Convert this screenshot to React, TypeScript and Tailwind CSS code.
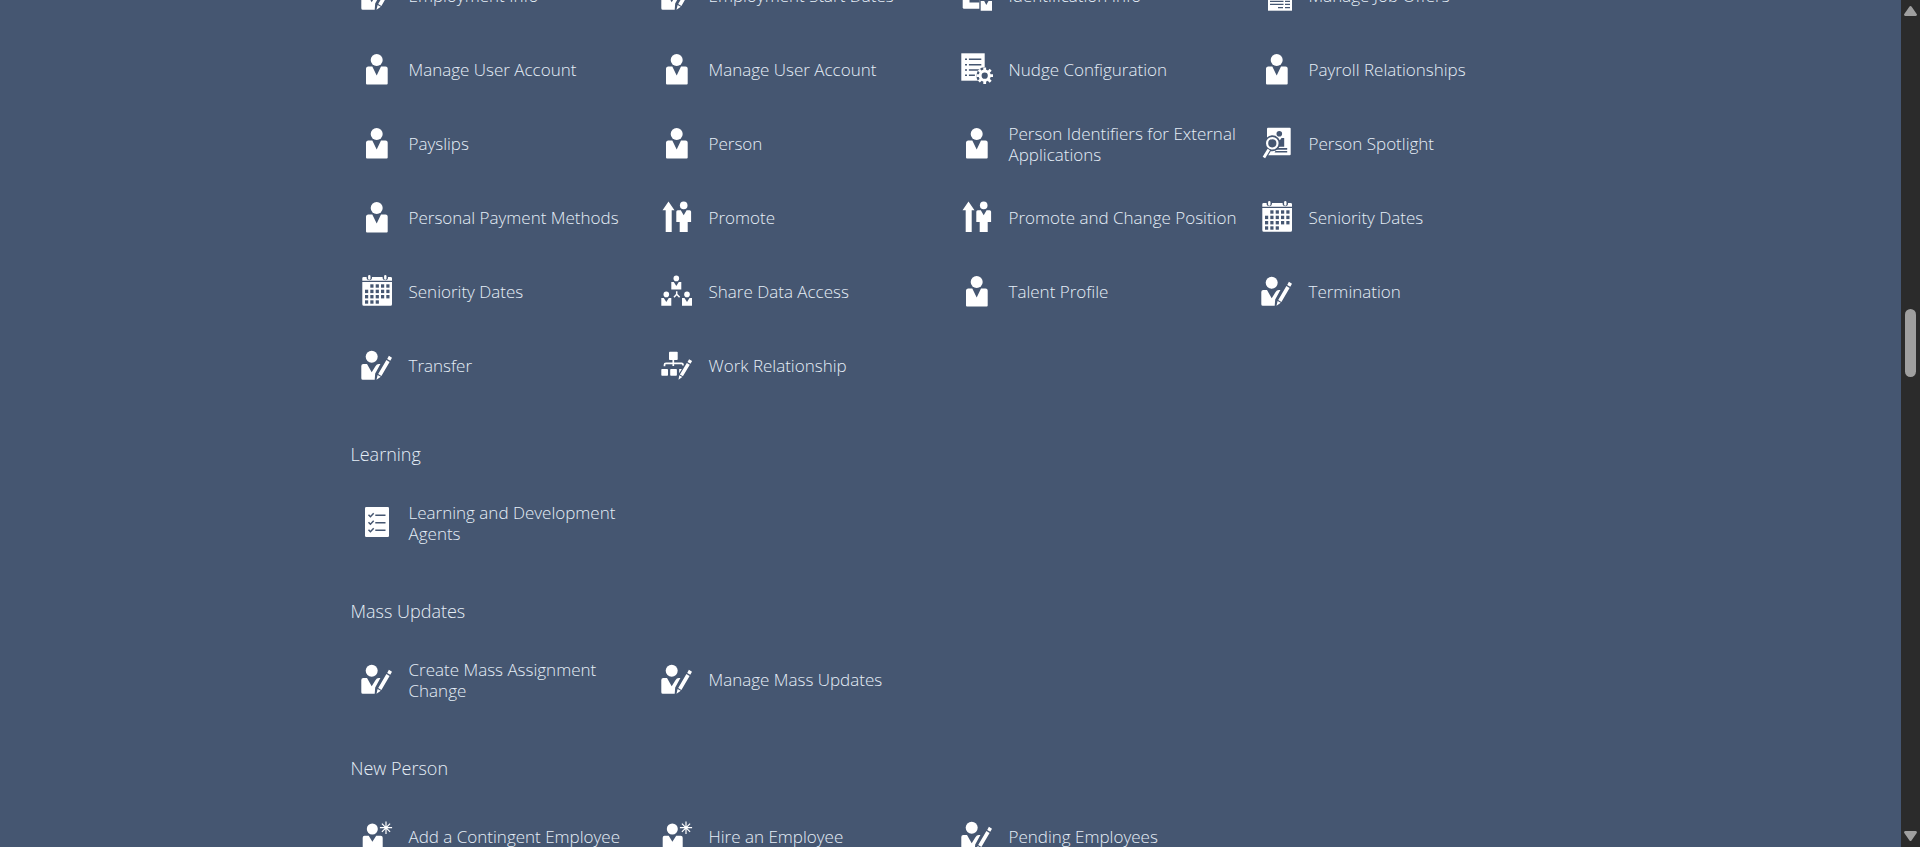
import type { ReactNode } from 'react';

const BG = '#455671';

type IconName =
  | 'person'
  | 'edit'
  | 'idCard'
  | 'offers'
  | 'nudge'
  | 'spotlight'
  | 'promote'
  | 'calendar'
  | 'share'
  | 'work'
  | 'checklist'
  | 'add';

const cells: [number, number][] = [];
[9.3, 14.7, 20, 25.3].forEach((y, row) => {
  [4, 9.3, 14.7, 20, 25.3].forEach((x, col) => {
    if (row === 0 && col === 0) return;
    if (row === 3 && col > 2) return;
    cells.push([x, y]);
  });
});

const icons: Record<IconName, ReactNode> = {
  person: (
    <>
      <circle cx="15.7" cy="6.9" r="6" />
      <path d="M7 13.4h4.3l4.4 9 4.3-9h4.5a2.2 2.2 0 0 1 2.2 2.2V30.400a1 1 0 0 1-1 1H6a1 1 0 0 1-1-1V15.600a2.2 2.2 0 0 1 2-2.2z" />
    </>
  ),
  edit: (
    <>
      <circle cx="10.7" cy="7.7" r="6" />
      <path d="M2.3 15H6l4.7 8.2L14.6 17a4 4 0 0 1 3.2-2h1.6L14.2 24.6l-.5 6.1H1.8A1.5 1.5 0 0 1 .3 29.2V17a2 2 0 0 1 2-2z" />
      <path d="M27.9 6.8 31 8.7l-1.7 3.1-3.1-1.9zM25.4 11l3.2 1.9-8.2 14-3.2-1.9zM16.6 25.9l3.2 1.9-4.3 2.9z" />
    </>
  ),
  idCard: (
    <>
      <path d="M1.7 6h16.600v23.700H3.2a1.5 1.5 0 0 1-1.5-1.5z" />
      <path fill={BG} d="M8.5 12h10v11.500h-10z" />
      <circle cx="25.3" cy="16.8" r="3" />
      <path d="M19.7 22h3.5l2.1 4 2.2-4H31v9.7H19.7z" />
    </>
  ),
  offers: (
    <>
      <path d="M7 6h24v25.7H7z" />
      <path
        stroke={BG}
        strokeWidth="1.3"
        d="M9 22.3h13.5M24 22.3h5M9 25.3h13.5M24 25.3h5M17 28.6h5M24 28.6h5"
      />
    </>
  ),
  nudge: (
    <>
      <path d="M.3.3h23.4v27.4H.3z" />
      <path
        stroke={BG}
        strokeWidth="1.6"
        d="M4 6.3h2M7.9 6.3h12.4M4 11.7h2M7.9 11.7h12.4M4 17h2M7.9 17h10M4 22.3h2M7.9 22.3h6"
      />
      <circle cx="23.7" cy="22.7" r="8.4" fill={BG} />
      <circle cx="23.7" cy="22.7" r="4.6" fill="none" stroke="white" strokeWidth="3" />
      <path
        stroke="white"
        strokeWidth="2.8"
        d="M23.7 14.4v3M23.7 28v3M15.4 22.7h3M29 22.7h3M17.8 16.8l2.2 2.2M27.5 26.5l2.2 2.2M17.8 28.6l2.2-2.2M27.5 18.9l2.2-2.2"
      />
    </>
  ),
  spotlight: (
    <>
      <rect x="6" y=".7" width="23.7" height="27.6" rx="1" />
      <circle cx="18.3" cy="6.8" r="2.8" fill={BG} />
      <path fill={BG} d="M14 11h3l1.7 2.5 1.8-2.5h2.7v8.7H16zM15.7 21h10.5v1.7H15zM14.5 24h11.7v1.6H13.5z" />
      <circle cx="11.3" cy="16.3" r="8" fill={BG} />
      <path stroke={BG} strokeWidth="5.2" d="M8.4 21.5 4 28.6" />
      <circle cx="11.3" cy="16.3" r="5.2" fill="none" stroke="white" strokeWidth="2.2" />
      <path stroke="white" strokeWidth="2.9" d="M7.8 22.4 2.9 30.4" />
    </>
  ),
  promote: (
    <>
      <path d="M7.5.6 13.5 9.2h-2.8V31h-6V9.2H1.5z" />
      <circle cx="22.7" cy="4.4" r="3.8" />
      <path d="M16.8 9.2h3l2.9 5 2.9-5h3a1.5 1.5 0 0 1 1.5 1.5V21h-3.4v10h-8V21h-3.4V10.700a1.5 1.5 0 0 1 1.5-1.5z" />
    </>
  ),
  calendar: (
    <>
      <path d="M2.6 2h27.1A1.3 1.3 0 0 1 31 3.3v2.4H1.3V3.3A1.3 1.3 0 0 1 2.6 2zM1.3 7H31v22.3a1.5 1.5 0 0 1-1.5 1.5H2.8a1.5 1.5 0 0 1-1.5-1.5z" />
      <path stroke={BG} strokeWidth="5.4" d="M8.3 0v2.6M24.3 0v2.6" strokeLinecap="round" />
      <path stroke="white" strokeWidth="2.4" d="M8.3 1.3v2.2M24.3 1.3v2.2" strokeLinecap="round" />
      {cells.map(([x, y]) => (
        <rect key={`${x}-${y}`} x={x} y={y} width="3.2" height="3.4" fill={BG} />
      ))}
    </>
  ),
  share: (
    <>
      <circle cx="15.3" cy="3.4" r="2.8" />
      <path d="M10.3 7h2.5l2.5 4 2.5-4h2.5v7.5h-10z" />
      <circle cx="5.3" cy="19.4" r="2.8" />
      <path d="M.3 23h2.5l2.5 4 2.5-4h2.5v7.7H.3z" />
      <circle cx="26" cy="19.4" r="2.8" />
      <path d="M21 23h2.5l2.5 4 2.5-4H31v7.7H21z" />
      <path fill="none" stroke="white" strokeWidth="1.5" d="M15.7 16.3v2.9l-2.7 3M15.7 19.2l2.9 3" />
    </>
  ),
  work: (
    <>
      <rect x="8" y="2.7" width="8.7" height="8.3" rx=".8" />
      <path
        fill="none"
        stroke="white"
        strokeWidth="1.7"
        d="M12.3 11v6M3.5 17.3v-1.5a1.500 1.500 0 0 1 1.5-1.5h15.5a1.5 1.5 0 0 1 1.5 1.5v.8"
      />
      <rect x=".3" y="20" width="6.7" height="6.7" rx=".8" />
      <rect x="9.2" y="20" width="6.7" height="6.7" rx=".8" />
      <path d="M18.200 20h2.600l-2.600 4.3z" />
      <path d="M28.1 10.200l3 1.700-1.6 2.900-3-1.700zM25.800 14l3 1.700-6.900 11.500-3-1.700zM18.300 26.200l3 1.700-3.800 2.800z" />
    </>
  ),
  checklist: (
    <>
      <rect x="4" y="1" width="24" height="30" rx="1.2" />
      <path
        fill="none"
        stroke={BG}
        strokeWidth="1.5"
        d="M14.3 9.3h10.2M14.3 16.8h10.2M14.3 24.3h10.2M7.5 8.8l1.9 1.9 3.3-3.5M7.5 16.3l1.9 1.9 3.3-3.5M7.5 23.8l1.9 1.9 3.3-3.5"
      />
    </>
  ),
  add: (
    <>
      <circle cx="11.3" cy="9" r="5.5" />
      <path d="M3.5 15.7h4.2l3.7 6 3.8-6h4.5a2 2 0 0 1 2 2V32h-20V17.7a2 2 0 0 1 1.8-2z" />
      <path stroke="white" strokeWidth="1.2" d="M25 1.5v12.4M18.9 7.7h12.2M20.9 3.6l8.2 8.2M20.9 11.8l8.2-8.2" />
    </>
  ),
};

type Entry = [IconName, string];

const people: Entry[] = [
  ['edit', 'Employment Info'],
  ['edit', 'Employment Start Dates'],
  ['idCard', 'Identification Info'],
  ['offers', 'Manage Job Offers'],
  ['person', 'Manage User Account'],
  ['person', 'Manage User Account'],
  ['nudge', 'Nudge Configuration'],
  ['person', 'Payroll Relationships'],
  ['person', 'Payslips'],
  ['person', 'Person'],
  ['person', 'Person Identifiers for External Applications'],
  ['spotlight', 'Person Spotlight'],
  ['person', 'Personal Payment Methods'],
  ['promote', 'Promote'],
  ['promote', 'Promote and Change Position'],
  ['calendar', 'Seniority Dates'],
  ['calendar', 'Seniority Dates'],
  ['share', 'Share Data Access'],
  ['person', 'Talent Profile'],
  ['edit', 'Termination'],
  ['edit', 'Transfer'],
  ['work', 'Work Relationship'],
];

const sections: { title: string; entries: Entry[] }[] = [
  { title: 'Learning', entries: [['checklist', 'Learning and Development Agents']] },
  {
    title: 'Mass Updates',
    entries: [
      ['edit', 'Create Mass Assignment Change'],
      ['edit', 'Manage Mass Updates'],
    ],
  },
  {
    title: 'New Person',
    entries: [
      ['add', 'Add a Contingent Employee'],
      ['add', 'Hire an Employee'],
      ['edit', 'Pending Employees'],
    ],
  },
];

function EntryGrid({ entries }: { entries: Entry[] }) {
  return (
    <ul className="grid grid-cols-4">
      {entries.map(([icon, label], i) => (
        <li key={i}>
          <a href="#" className="flex h-[74px] items-center gap-4 pr-2 pl-[10px]">
            <svg viewBox="0 0 32 32" className="size-8 shrink-0 fill-white" aria-hidden="true">
              {icons[icon]}
            </svg>
            <span className="pt-px text-[17px] leading-[21px]">{label}</span>
          </a>
        </li>
      ))}
    </ul>
  );
}

export default function App() {
  return (
    <div className="flex h-screen overflow-hidden bg-[#455671] font-['Open_Sans',sans-serif] font-light text-[#e6eef7]">
      <main className="min-w-0 flex-1 overflow-hidden">
        <div className="mx-auto -mt-[42px] max-w-[1200px]">
          <EntryGrid entries={people} />
          {sections.map(({ title, entries }) => (
            <section key={title}>
              <h2 className="pt-[38px] pb-[17px] text-[18px] leading-7">{title}</h2>
              <EntryGrid entries={entries} />
            </section>
          ))}
        </div>
      </main>
      <div className="flex w-[19px] flex-col items-center bg-[#2b2b2b] py-1.5" aria-hidden="true">
        <svg viewBox="0 0 13 10" className="h-[10px] w-[13px] fill-[#9f9f9f]">
          <path d="M5.5.6a1.3 1.3 0 0 1 2 0L12.700 8a1.2 1.2 0 0 1-1 1.9H1.3a1.2 1.2 0 0 1-1-1.9z" />
        </svg>
        <div className="grow-[293]" />
        <div className="h-[68px] w-[11px] rounded-full bg-[#9f9f9f]" />
        <div className="grow-[454]" />
        <svg viewBox="0 0 13 10" className="h-[10px] w-[13px] fill-[#9f9f9f]">
          <path d="M5.5 9.4a1.3 1.3 0 0 0 2 0L12.700 2a1.2 1.2 0 0 0-1-1.9H1.3A1.2 1.2 0 0 0 .3 2z" />
        </svg>
      </div>
    </div>
  );
}
